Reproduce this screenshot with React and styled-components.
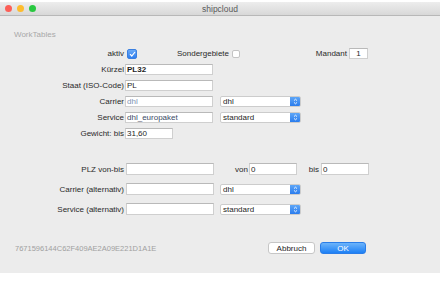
import React from "react";
import styled, { createGlobalStyle } from "styled-components";

const GlobalStyle = createGlobalStyle`
  html, body {
    margin: 0;
    padding: 0;
    background: #ffffff;
    font-family: "Liberation Sans", Arial, sans-serif;
  }
`;

const Window = styled.div`
  margin-top: 2px;
  width: 440px;
  height: 271px;
  display: flex;
  flex-direction: column;
  background: #ececec;
  overflow: hidden;
`;

const TitleBar = styled.div`
  height: 13px;
  display: flex;
  align-items: center;
  position: relative;
  background: linear-gradient(#ededed, #d8d8d8);
  border-bottom: 1px solid #b8b8b8;
`;

const Lights = styled.div`
  display: flex;
  gap: 5px;
  padding-left: 5px;
`;

const Light = styled.span`
  width: 7px;
  height: 7px;
  border-radius: 50%;
  background: ${(p) => p.color};
`;

const Title = styled.div`
  position: absolute;
  left: 0;
  right: 0;
  text-align: center;
  font-size: 8.5px;
  color: #5a5a5a;
`;

const Content = styled.div`
  display: flex;
  flex-direction: column;
  font-size: 8px;
  color: #2a2a2a;
`;

const Heading = styled.div`
  margin: 14px 0 0 14px;
  line-height: 9px;
  height: 9px;
  color: #a8a8a8;
`;

const Section = styled.div`
  display: flex;
  flex-direction: column;
  gap: ${(p) => p.gap}px;
  margin-top: ${(p) => p.top}px;
`;

const Row = styled.div`
  display: flex;
  align-items: center;
  height: ${(p) => p.h || 11}px;
`;

const Label = styled.span`
  width: ${(p) => p.w}px;
  flex: none;
  text-align: right;
  white-space: nowrap;
  margin-right: ${(p) => (p.gap == null ? 1 : p.gap)}px;
`;

const Input = styled.div`
  box-sizing: border-box;
  width: ${(p) => p.w}px;
  height: 100%;
  flex: none;
  background: #fff;
  border: 1px solid #cfcfcf;
  border-top-color: #b9b9b9;
  padding-left: ${(p) => (p.center ? 0 : 1)}px;
  display: flex;
  align-items: center;
  justify-content: ${(p) => (p.center ? "center" : "flex-start")};
  color: ${(p) => p.color || "#1e1e1e"};
  font-weight: ${(p) => (p.bold ? "bold" : "normal")};
  white-space: nowrap;
  overflow: hidden;
`;

const Check = styled.span`
  box-sizing: border-box;
  width: ${(p) => p.s}px;
  height: ${(p) => p.s}px;
  flex: none;
  border-radius: 2px;
  display: flex;
  align-items: center;
  justify-content: center;
  background: ${(p) => (p.on ? "linear-gradient(#6aaaf7, #2f7fef)" : "#fff")};
  border: 1px solid ${(p) => (p.on ? "#3a7fe0" : "#c4c4c4")};
`;

const Select = styled.div`
  box-sizing: border-box;
  width: 81px;
  height: 11px;
  margin-left: ${(p) => p.ml}px;
  flex: none;
  display: flex;
  background: #fff;
  border: 1px solid #cccccc;
  border-radius: 2px;
  overflow: hidden;
`;

const SelectText = styled.span`
  flex: 1;
  padding-left: 2px;
  display: flex;
  align-items: center;
  color: #1e1e1e;
`;

const Stepper = styled.span`
  width: 10px;
  display: flex;
  align-items: center;
  justify-content: center;
  background: linear-gradient(#5ea6f7, #2a7ced);
`;

const Footer = styled.div`
  margin-top: 27px;
  height: 12px;
  display: flex;
  align-items: center;
  padding: 0 74px 0 15px;
`;

const Ident = styled.span`
  color: #a0a0a0;
  font-size: 7.5px;
  flex: 1;
`;

const Buttons = styled.div`
  display: flex;
  gap: 5px;
`;

const Button = styled.div`
  box-sizing: border-box;
  width: ${(p) => p.w}px;
  height: 12px;
  border-radius: 3px;
  display: flex;
  align-items: center;
  justify-content: center;
  color: ${(p) => (p.primary ? "#fff" : "#1e1e1e")};
  background: ${(p) => (p.primary ? "linear-gradient(#6db4fa, #1d80f5)" : "#fff")};
  border: 1px solid ${(p) => (p.primary ? "#2a7de8" : "#c6c6c6")};
`;

const Tick = () => (
  <svg width="7" height="6" viewBox="0 0 7 6">
    <path d="M1 3.2 L2.8 5 L6 1" fill="none" stroke="#fff" strokeWidth="1.2" />
  </svg>
);

const Arrows = () => (
  <svg width="5" height="7" viewBox="0 0 5 7">
    <path d="M1 2.6 L2.5 1.2 L4 2.6 M1 4.4 L2.5 5.8 L4 4.4" fill="none" stroke="#fff" strokeWidth="0.9" />
  </svg>
);

const Dropdown = ({ value, ml = 7 }) => (
  <Select ml={ml}>
    <SelectText>{value}</SelectText>
    <Stepper>
      <Arrows />
    </Stepper>
  </Select>
);

export default function App() {
  return (
    <>
      <GlobalStyle />
      <Window>
        <TitleBar>
          <Lights>
            <Light color="#fc5f57" />
            <Light color="#fdbc2e" />
            <Light color="#29c840" />
          </Lights>
          <Title>shipcloud</Title>
        </TitleBar>
        <Content>
          <Heading>WorkTables</Heading>

          <Section gap={5} top={9}>
            <Row>
              <Label w={124} gap={3}>aktiv</Label>
              <Check s={10} on>
                <Tick />
              </Check>
              <Label w={92} gap={3}>Sondergebiete</Label>
              <Check s={8} />
              <Label w={107} gap={2}>Mandant</Label>
              <Input w={19} center>1</Input>
            </Row>
            <Row>
              <Label w={124}>Kürzel</Label>
              <Input w={88} bold>PL32</Input>
            </Row>
            <Row>
              <Label w={124}>Staat (ISO-Code)</Label>
              <Input w={88}>PL</Input>
            </Row>
            <Row>
              <Label w={124}>Carrier</Label>
              <Input w={88} color="#7d93b3">dhl</Input>
              <Dropdown value="dhl" />
            </Row>
            <Row>
              <Label w={124}>Service</Label>
              <Input w={88} color="#3b4a66">dhl_europaket</Input>
              <Dropdown value="standard" />
            </Row>
            <Row>
              <Label w={124}>Gewicht: bis</Label>
              <Input w={48}>31,60</Input>
            </Row>
          </Section>

          <Section gap={8} top={24}>
            <Row h={12}>
              <Label w={124} gap={2}>PLZ von-bis</Label>
              <Input w={88} />
              <Label w={34}>von</Label>
              <Input w={48}>0</Input>
              <Label w={22} gap={2}>bis</Label>
              <Input w={48}>0</Input>
            </Row>
            <Row h={12}>
              <Label w={124} gap={2}>Carrier (alternativ)</Label>
              <Input w={88} />
              <Dropdown value="dhl" ml={6} />
            </Row>
            <Row h={12}>
              <Label w={124} gap={2}>Service (alternativ)</Label>
              <Input w={88} />
              <Dropdown value="standard" ml={6} />
            </Row>
          </Section>

          <Footer>
            <Ident>7671596144C62F409AE2A09E221D1A1E</Ident>
            <Buttons>
              <Button w={47}>Abbruch</Button>
              <Button w={46} primary>OK</Button>
            </Buttons>
          </Footer>
        </Content>
      </Window>
    </>
  );
}
